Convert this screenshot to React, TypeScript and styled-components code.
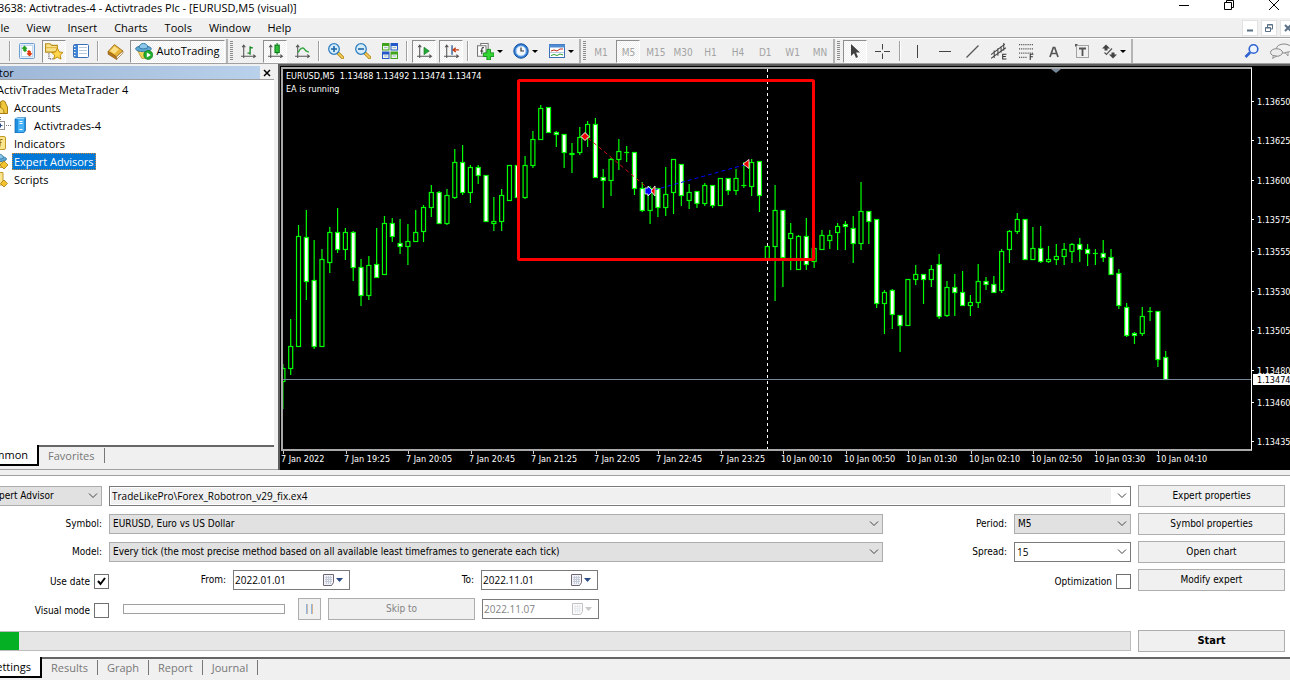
import React from 'react';
import styled, { createGlobalStyle, css } from 'styled-components';

const uiFont = '"Open Sans", "Noto Sans", sans-serif';
const formFont = '"DejaVu Sans Condensed", "Liberation Sans", sans-serif';

const GlobalStyle = createGlobalStyle`
  *, *::before, *::after { box-sizing: border-box; }
  body { margin: 0; background: #f0f0f0; overflow-x: hidden; }
  button, input, select { font: inherit; color: inherit; margin: 0; }
`;

/* ---------- Window shell ---------- */

const Screen = styled.div`
  overflow: hidden;
`;

/* The terminal window is wider than the screen on both sides. */
const Window = styled.div`
  display: flex;
  flex-direction: column;
  min-height: 100vh;
  margin: 0 -8px 0 -40px;
  background: #f0f0f0;
  color: #000;
  font: 11px/16px ${uiFont};
`;

const TitleBar = styled.header`
  display: flex;
  justify-content: space-between;
  align-items: flex-start;
  height: 18px;
  padding: 0 2px 0 38px;
  background: #fff;
`;

const Title = styled.h1`
  margin: 0;
  font-size: 11px;
  line-height: 15px;
  font-weight: 400;
  white-space: pre;
`;

const CaptionButtons = styled.div`
  display: flex;
`;

const CaptionButton = styled.button`
  display: flex;
  justify-content: center;
  width: 45px;
  height: 12px;
  padding: 0;
  border: 0;
  background: none;
`;

const MenuBar = styled.nav`
  display: flex;
  align-items: center;
  height: 20px;
  padding: 0 2px 0 32px;
  border-bottom: 1px solid #a0a0a0;
`;

const MenuItem = styled.button`
  padding: 0;
  margin-right: 17px;
  border: 0;
  background: none;
`;

const DocumentButtons = styled.div`
  display: flex;
  gap: 3px;
  margin-left: auto;
`;

const DocumentButton = styled.button`
  display: flex;
  align-items: center;
  justify-content: center;
  width: 16px;
  height: 16px;
  padding: 0;
  border: 1px solid #e2e2e2;
  background: #fff;
`;

/* ---------- Toolbar ---------- */

const Toolbar = styled.div`
  display: flex;
  align-items: stretch;
  height: 26px;
  border-top: 1px solid #fff;
  border-bottom: 1px solid #a0a0a0;
`;

const ToolGroup = styled.div<{ $start?: number }>`
  display: flex;
  align-items: center;
  gap: 3px;
  padding: 0 1px 0 ${(p) => p.$start ?? 2}px;
  border-right: 2px solid #b4b4b4;
`;

const ToolList = styled.div<{ $width: number }>`
  display: flex;
  align-items: center;
  justify-content: space-between;
  width: ${(p) => p.$width}px;
`;

const Grip = styled.span`
  width: 3px;
  height: 20px;
  background: repeating-linear-gradient(#8c8c8c 0 1px, #f0f0f0 1px 2px);
`;

const Separator = styled.span`
  width: 2px;
  height: 20px;
  margin: 0 1px;
  border-left: 1px solid #a0a0a0;
  border-right: 1px solid #fff;
`;

const pressedLook = css`
  border-color: #8e8e8e #fff #fff #8e8e8e;
  background: repeating-conic-gradient(#fff 0 25%, #f0f0f0 0 50%) 0 0 / 2px 2px;
`;

const ToolButton = styled.button<{ $pressed?: boolean; $drop?: boolean }>`
  display: flex;
  flex: none;
  align-items: center;
  justify-content: ${(p) => (p.$drop ? 'flex-start' : 'center')};
  width: ${(p) => (p.$drop ? 33 : 24)}px;
  height: 23px;
  padding: ${(p) => (p.$drop ? '0 0 0 3px' : 0)};
  border: 1px solid transparent;
  background: none;
  ${(p) => p.$pressed && pressedLook}
`;

const AutoTradingButton = styled(ToolButton)`
  gap: 3px;
  width: 95px;
`;

const TimeframeButton = styled(ToolButton)`
  padding-top: 3px;
  color: #a3a3a3;
  font: 10px/16px ${formFont};
`;

const ToolEnd = styled.div`
  display: flex;
  align-items: center;
  gap: 5px;
  margin-left: auto;
  padding-right: 5px;
`;

const Glyph = styled.svg.attrs({ 'aria-hidden': true })`
  display: block;
  flex: none;
`;

/* ---------- Navigator ---------- */

const Main = styled.main`
  display: flex;
`;

const Navigator = styled.aside`
  display: flex;
  flex-direction: column;
  flex: none;
  width: 318px;
  padding: 1px 4px 1px 0;
  border-bottom: 1px solid #a0a0a0;
`;

const NavigatorHeader = styled.div`
  display: flex;
  height: 15px;
  padding: 1px 0 0;
  border-bottom: 1px solid #a0a0a0;
`;

const NavigatorTitle = styled.h2`
  flex: 1;
  margin: 0;
  padding-left: 4px;
  background: linear-gradient(90deg, #9ab3d4, #b9d1ea);
  font-size: 11px;
  line-height: 13px;
  font-weight: 400;
`;

const CloseButton = styled.button`
  display: flex;
  align-items: center;
  justify-content: center;
  width: 14px;
  padding: 0;
  border: 0;
  background: none;
`;

const Tree = styled.ul`
  flex: 1;
  margin: 0;
  padding: 0;
  background: #fff;
  list-style: none;
`;

const TreeRow = styled.li<{ $indent: number }>`
  display: flex;
  align-items: center;
  height: 18px;
  padding-left: ${(p) => p.$indent}px;
`;

const TreeLabel = styled.span<{ $selected?: boolean }>`
  margin-left: 4px;
  padding: 0 1px;
  border: 1px solid transparent;
  line-height: 15px;
  ${(p) =>
    p.$selected &&
    css`
      border: 1px dotted #d08a3a;
      background: #0078d7;
      color: #fff;
    `}
`;

const TabStrip = styled.div`
  display: flex;
  align-items: flex-start;
  height: 23px;
  border-top: 2px solid #666;
`;

const ActiveTab = styled.button<{ $width: number }>`
  width: ${(p) => p.$width}px;
  height: 21px;
  margin-top: -2px;
  padding: 1px 9px 0 0;
  border: solid #000;
  border-width: 0 2px 2px 0;
  background: #fff;
  text-align: right;
`;

const Tab = styled.button`
  height: 15px;
  margin-top: 1px;
  padding: 0 9px;
  border: 0;
  border-right: 1px solid #777;
  background: none;
  color: #777;
  line-height: 13px;
`;

/* ---------- Chart ---------- */

const ChartWindow = styled.section`
  display: grid;
  flex: 1;
  grid-template-columns: minmax(0, 1fr) 46px;
  min-width: 0;
  padding: 1px 0 0 1px;
  border: solid #5c5c5c;
  border-width: 2px 0 0 2px;
  background: #000;
`;

const PlotFrame = styled.div`
  border: 2px solid #a9a9a9;
  border-right: 1px solid #fff;
`;

const ChartSvg = styled.svg`
  display: block;
  width: 100%;
  font: 9px ${formFont};
`;

/* ---------- Tester ---------- */

const Tester = styled.section`
  display: flex;
  flex: 1;
  flex-direction: column;
  margin-top: 5px;
  border-top: 1px solid #a0a0a0;
`;

const Form = styled.form`
  display: flex;
  flex-direction: column;
  gap: 6px;
  padding: 9px 13px 5px 0;
  background: #fff;
  font: 10px/16px ${formFont};
`;

const FormRow = styled.div<{ $lead?: number }>`
  display: grid;
  grid-template-columns: ${(p) => p.$lead ?? 142}px minmax(0, 1fr) 147px;
  column-gap: 7px;
  align-items: center;
`;

const DateRows = styled.div`
  display: grid;
  row-gap: 7px;
  padding-bottom: 4px;
`;

const ProgressRow = styled.div`
  display: grid;
  grid-template-columns: minmax(0, 1fr) 147px;
  column-gap: 7px;
  align-items: center;
`;

const Fields = styled.div<{ $pad?: number }>`
  display: flex;
  align-items: center;
  gap: 7px;
  padding-left: ${(p) => p.$pad ?? 0}px;
`;

const Label = styled.label<{ $width?: number }>`
  flex: none;
  width: ${(p) => (p.$width ? `${p.$width}px` : 'auto')};
  text-align: right;
`;

const CheckField = styled.label`
  display: flex;
  align-items: center;
  justify-content: flex-end;
  gap: 4px;
  margin-left: auto;
  padding-top: 3px;
`;

const CheckBox = styled.input.attrs({ type: 'checkbox' })`
  appearance: none;
  width: 15px;
  height: 15px;
  border: 1px solid #707070;
  background: #fff;
  &:checked {
    background: #fff
      url("data:image/svg+xml,%3Csvg xmlns='http://www.w3.org/2000/svg' viewBox='0 0 13 13'%3E%3Cpath d='M3 6l2.5 3L10 3' fill='none' stroke='%23000' stroke-width='2'/%3E%3C/svg%3E")
      center / 13px 13px;
  }
`;

const ComboShell = styled.div<{ $width?: number; $indent?: number }>`
  display: grid;
  flex: ${(p) => (p.$width ? 'none' : 1)};
  width: ${(p) => (p.$width ? `${p.$width}px` : 'auto')};
  margin-left: ${(p) => p.$indent ?? 0}px;
  align-items: center;

  > * {
    grid-area: 1 / 1;
  }

  > svg {
    justify-self: end;
    margin-right: 4px;
    pointer-events: none;
  }
`;

const Select = styled.select`
  appearance: none;
  width: 100%;
  height: 20px;
  padding: 0 3px;
  border: 1px solid #adadad;
  border-radius: 0;
  background: #e1e1e1;
`;

const ComboInput = styled.input<{ $shaded?: boolean }>`
  width: 100%;
  height: 20px;
  padding: 0 18px 1px 2px;
  border: 1px solid #7a7a7a;
  background: ${(p) =>
    p.$shaded ? 'linear-gradient(#f0f0f0, #f0f0f0) 1px 1px / calc(100% - 20px) 16px no-repeat, #fff' : '#fff'};
  font: 10px/16px ${uiFont};
`;

const DateShell = styled.div<{ $disabled?: boolean }>`
  display: flex;
  align-items: center;
  width: 117px;
  height: 20px;
  padding-right: 4px;
  border: 1px solid #7a7a7a;
  background: #fff;
  color: ${(p) => (p.$disabled ? '#838383' : '#000')};
`;

const DateInput = styled.input`
  flex: 1;
  min-width: 0;
  padding: 0 0 1px 1px;
  border: 0;
  background: none;
  font: 10px/16px ${uiFont};
`;

const CalendarButton = styled.button`
  padding: 0;
  border: 0;
  background: none;
`;

const SpeedSlider = styled.input.attrs({ type: 'range' })`
  appearance: none;
  width: 162px;
  height: 10px;
  margin-right: 6px;
  border: 1px solid #a0a0a0;
  background: #fdfdfd;
  &::-webkit-slider-thumb {
    appearance: none;
    width: 0;
    height: 0;
  }
`;

const PushButton = styled.button<{ $narrow?: boolean; $strong?: boolean }>`
  display: flex;
  align-items: center;
  justify-content: center;
  width: ${(p) => (p.$narrow ? 23 : 147)}px;
  height: 22px;
  padding: 0;
  border: 1px solid #adadad;
  background: #f0f0f0;
  font-size: ${(p) => (p.$strong ? 11 : 10)}px;
  font-weight: ${(p) => (p.$strong ? 700 : 400)};
  &:disabled {
    color: #838383;
  }
`;

const Progress = styled.progress`
  appearance: none;
  display: block;
  width: 100%;
  height: 20px;
  border: 1px solid #bcbcbc;
  &::-webkit-progress-bar {
    background: #e6e6e6;
  }
  &::-webkit-progress-value {
    background: #06b025;
  }
`;

/* ---------- Icons ---------- */

type IconProps = { children: React.ReactNode; size?: number };

const Icon = ({ children, size = 16 }: IconProps) => (
  <Glyph width={size} height={size} viewBox="0 0 16 16" fill="none">
    {children}
  </Glyph>
);

const DropArrow = () => (
  <Glyph width="9" height="16" viewBox="0 0 9 16">
    <path d="M3 7h6l-3 3z" fill="#000" />
  </Glyph>
);

const Chevron = () => (
  <Glyph width="10" height="8" viewBox="0 0 10 8">
    <path d="M1 1.5l4 4 4-4" fill="none" stroke="#444" />
  </Glyph>
);

const MarketWatchIcon = () => (
  <Icon>
    <rect x="0.500" y="0.500" width="15" height="15" rx="1" fill="#e2effb" stroke="#6d9fd0" />
    <rect x="2.500" y="2.500" width="11" height="11" fill="#fff" stroke="#c3d8ee" />
    <path d="M5.500 2.500l3 3-1.500.5 1 1.500-2 1.500-2-1.500.3-1.500L2.500 5.500z" fill="#25a020" />
    <path d="M10.500 13.500l-3-3 1.500-.5-1-1.500 2-1.500 2 1.500-.3 1.500 1.800.5z" fill="#e03a10" />
  </Icon>
);

const NavigatorIcon = () => (
  <Icon size={18}>
    <path d="M0.500 1.500h4l1.500 1.500h5v6H0.500z" fill="#f9e08b" stroke="#b98f1f" />
    <path d="M1 5h10" stroke="#e0b840" />
    <path d="M3.500 10v5h4" stroke="#555" strokeDasharray="1 1" />
    <path d="M11 5.500l1.600 3.300 3.400.5-2.500 2.400.7 3.500-3.200-1.700-3.200 1.700.7-3.500L6 9.300l3.400-.5z" fill="#ffd64d" stroke="#b98200" strokeWidth="0.800" />
  </Icon>
);

const TerminalIcon = () => (
  <Icon>
    <rect x="0.500" y="1.500" width="15" height="13" rx="1" fill="#fff" stroke="#3b6fb5" />
    <rect x="1" y="2" width="4" height="12" fill="#3f83d6" />
    <path d="M1 3.500h1.500M1 6.500h1.500M1 9.500h1.500M1 12.500h1.500" stroke="#fff" />
    <path d="M6 4.500h8M6 7.500h8M6 10.500h8" stroke="#b9c9dd" />
  </Icon>
);

const BookIcon = () => (
  <Icon size={17}>
    <path d="M1 8L7 1.500l8 6L9 13z" fill="#e9b536" stroke="#9a6a10" strokeWidth="0.800" />
    <path d="M3 7.500L7 3l4 3-4 4z" fill="#fbe08a" />
    <path d="M1 8v2.500L9 15.500V13z" fill="#b87818" stroke="#8a5a10" strokeWidth="0.600" />
    <path d="M9 13l6-5.500v2L9 15.500z" fill="#fff" stroke="#8a5a10" strokeWidth="0.600" />
  </Icon>
);

const ExpertHat = () => (
  <>
    <path d="M2 7h11l-2 7.500H6z" fill="#f4d35a" stroke="#b38a1c" strokeWidth="0.700" />
    <ellipse cx="7.500" cy="6" rx="7" ry="2.600" fill="#5fa8d6" stroke="#2d739f" strokeWidth="0.800" />
    <path d="M3.500 5C4 0 11 0 11.500 5c-2 1.500-6 1.500-8 0z" fill="#8cc7ea" stroke="#2d739f" strokeWidth="0.800" />
  </>
);

const AutoTradingIcon = () => (
  <Icon size={18}>
    <ExpertHat />
    <circle cx="11.800" cy="11.500" r="4" fill="#1fae2b" stroke="#0b7a15" strokeWidth="0.600" />
    <path d="M10.500 9.300l3.600 2.200-3.600 2.200z" fill="#fff" />
  </Icon>
);

const Axes = () => (
  <path d="M3.500 2v12M1 12.500h13M2 4l1.500-2L5 4M12.500 11l2 1.500-2 1.500" stroke="#555" />
);

const BarsIcon = () => (
  <Icon size={17}>
    <Axes />
    <path d="M9.500 3v8M7 9.500h2.500M9.500 4.500H12" stroke="#1c8a2a" strokeWidth="1.300" />
  </Icon>
);

const CandlesIcon = () => (
  <Icon size={17}>
    <Axes />
    <path d="M9.500 0v11" stroke="#0c7a18" />
    <rect x="7.500" y="2" width="4" height="7" fill="#2fc13c" stroke="#0c7a18" />
  </Icon>
);

const LineIcon = () => (
  <Icon size={17}>
    <Axes />
    <path d="M4 9c2-5 5-5 6-3 1 2 2 2 4 2.500" stroke="#2aa238" strokeWidth="1.200" />
  </Icon>
);

const ZoomIcon = ({ plus }: { plus?: boolean }) => (
  <Icon>
    <path d="M10 10l4.500 4.500" stroke="#b98a1c" strokeWidth="3.200" strokeLinecap="round" />
    <path d="M10.500 10.500l4 4" stroke="#f6d45c" strokeWidth="1.600" strokeLinecap="round" />
    <circle cx="6" cy="6" r="5.300" fill="#d5ecfb" stroke="#2f7fc0" strokeWidth="1.300" />
    <path d={plus ? 'M3 6h6M6 3v6' : 'M3 6h6'} stroke="#1c66a8" strokeWidth="1.600" />
  </Icon>
);

const TileIcon = () => (
  <Icon>
    <rect x="0" y="0" width="7.500" height="7.500" fill="#3fa31b" />
    <rect x="8.500" y="0" width="7.500" height="7.500" fill="#2458c8" />
    <rect x="0" y="8.500" width="7.500" height="7.500" fill="#2458c8" />
    <rect x="8.500" y="8.500" width="7.500" height="7.500" fill="#3fa31b" />
    <path d="M1 3h5.500v3.500H1zM9.500 3H15v3.500H9.500zM1 11.500h5.500V15H1zM9.500 11.500H15V15H9.500z" fill="#eef5e8" />
    <path d="M2 4.500h3.500M10.500 4.500H14M2 13h3.500M10.500 13H14" stroke="#9fb8d8" />
  </Icon>
);

const ScrollIcon = () => (
  <Icon size={17}>
    <Axes />
    <path d="M7.500 4l5 3.500-5 3.500z" fill="#25a83a" stroke="#0f7a20" strokeWidth="0.600" />
  </Icon>
);

const ShiftIcon = () => (
  <Icon size={17}>
    <Axes />
    <path d="M8.500 2v9" stroke="#2f5f9a" strokeWidth="1.300" />
    <path d="M15 6.500H10M12 4.500l-2.500 2 2.500 2" stroke="#c33c14" strokeWidth="1.300" />
  </Icon>
);

const IndicatorsIcon = () => (
  <Icon size={17}>
    <path d="M3.500 0.500h7v9h-7z" fill="#fff" stroke="#777" />
    <path d="M0.500 2.500h8v10h-8z" fill="#fff" stroke="#777" />
    <path d="M6.500 4.500c-2-.6-2 1-2 2v4M3 7.500h3" stroke="#333" />
    <path d="M9.300 6h3.400v3.300H16v3.400h-3.300V16H9.300v-3.300H6V9.300h3.300z" fill="#35d535" stroke="#0a8a12" strokeWidth="0.800" />
  </Icon>
);

const ClockIcon = () => (
  <Icon>
    <circle cx="8" cy="8" r="7.200" fill="#2f7fd6" stroke="#164f9c" />
    <circle cx="8" cy="8" r="5" fill="#f4f9ff" stroke="#9fc6ee" />
    <path d="M8 4.500V8h3" stroke="#333" strokeWidth="1.200" />
  </Icon>
);

const TemplateIcon = () => (
  <Icon>
    <rect x="0.500" y="1.500" width="15" height="13" fill="#fff" stroke="#3b6fb5" />
    <path d="M0 3h16" stroke="#4f8cd2" strokeWidth="3" />
    <path d="M2 8l3-1 3 1 3-2h3" stroke="#c22c1a" />
    <path d="M1 9.500h14" stroke="#b9c9dd" />
    <path d="M2 12.500l3-1 3 1 3-1.500 3 1" stroke="#2f9e35" />
  </Icon>
);

const CursorIcon = () => (
  <Icon>
    <path d="M4 1v12l3-2.700 2 4.700 2-1-2-4.500h4z" fill="#404040" />
  </Icon>
);

const CrosshairIcon = () => (
  <Icon>
    <path d="M8.500 1v5.500M8.500 10.500V16M1 8.500h6M10 8.500h6" stroke="#444" />
  </Icon>
);

const VerticalLineIcon = () => (
  <Icon>
    <path d="M8.500 2v13" stroke="#444" />
  </Icon>
);

const HorizontalLineIcon = () => (
  <Icon>
    <path d="M2 8.500h12" stroke="#444" />
  </Icon>
);

const TrendLineIcon = () => (
  <Icon>
    <path d="M2.500 14.500L14.500 2.500" stroke="#555" strokeWidth="1.200" />
  </Icon>
);

const ChannelIcon = () => (
  <Icon size={17}>
    <path d="M0 11L13 1M0 14.500L14 4.500M3 14V7M6.500 12V5M9.500 9V3M12 7V0" stroke="#444" />
    <path d="M14.500 10.500h-3.500v4.500h3.500M11 12.700h3" stroke="#333" />
  </Icon>
);

const FibonacciIcon = () => (
  <Icon size={17}>
    <path d="M1 1.500h14M1 5.500h14M1 9.500h14M1 13.500h8" stroke="#444" strokeDasharray="1 1" />
    <path d="M14.500 10.500h-3V16M11.500 13h2.500" stroke="#333" />
  </Icon>
);

const TextIcon = () => (
  <Icon>
    <path d="M4 14L7.300 4.500h1.400L12 14M5.500 10.500h5" stroke="#555" strokeWidth="1.700" />
  </Icon>
);

const TextLabelIcon = () => (
  <Icon>
    <rect x="2.500" y="2.500" width="12" height="12" stroke="#555" strokeDasharray="1 1" />
    <path d="M5 5.500h7M8.500 5v8" stroke="#555" strokeWidth="1.800" />
    <path d="M1 1h3L1 4z" fill="#555" />
  </Icon>
);

const ShapesIcon = () => (
  <Icon>
    <path d="M5 1.500L9 5.500H6.500V7.500h-3V5.500H1z" fill="#444" />
    <path d="M12 15.500l-4-4h2.500V9.500h3v2H16z" fill="#444" />
    <path d="M3.500 9.500l2 2L11 5.500" stroke="#555" strokeWidth="1.200" />
  </Icon>
);

const SearchIcon = () => (
  <Icon>
    <circle cx="9.500" cy="6" r="4.300" stroke="#2e62d0" strokeWidth="1.600" fill="#eef4ff" />
    <path d="M6 9.500L1.500 14" stroke="#2e62d0" strokeWidth="2.600" />
  </Icon>
);

const ChatIcon = () => (
  <Glyph width="24" height="16" viewBox="0 0 24 16">
    <ellipse cx="15" cy="5.500" rx="7.500" ry="4.500" fill="#f2f2f2" stroke="#888" />
    <path d="M16 9.500l3 3.500v-4z" fill="#eee" stroke="#888" strokeWidth="0.800" />
    <ellipse cx="7.500" cy="9.500" rx="6" ry="3.800" fill="#ececec" stroke="#888" />
    <path d="M4.500 12.500L3.500 15.500l4-2.300z" fill="#ddd" stroke="#888" strokeWidth="0.800" />
  </Glyph>
);

const AccountsIcon = () => (
  <Icon>
    <path d="M8.500 14.500V4c0-3 5-3 5 0l2 4v6.500z" fill="#f0c73a" stroke="#a67c12" />
    <path d="M1 14.500c0-5 2-6.500 5-6.500s6 1.500 6 6.500z" fill="#f7d969" stroke="#a67c12" />
    <circle cx="6" cy="5" r="3" fill="#f7d969" stroke="#a67c12" />
  </Icon>
);

const ServerIcon = () => (
  <Icon>
    <path d="M3 2l3-1.500h7.500v13L11.500 16H3z" fill="#1f8fe0" stroke="#0f63ad" strokeWidth="0.700" />
    <path d="M3 2l3-1.500h7.500L11.500 2z" fill="#9ed4fa" />
    <rect x="6" y="2" width="6" height="13" fill="#48b2f5" />
    <path d="M7.500 4.500h3M7.500 6.500h3M7.500 12.500h3" stroke="#fff" />
  </Icon>
);

const IndicatorFolderIcon = () => (
  <Icon>
    <rect x="1.500" y="1.500" width="12" height="13" rx="1.500" fill="#fbe58d" stroke="#c29a26" />
    <path d="M10.500 4.500H9c-1 0-1 .5-1 2v5M6.500 7.500h3" stroke="#8a6a10" />
  </Icon>
);

const ExpertFolderIcon = () => (
  <Icon>
    <ExpertHat />
    <path d="M12 8l4 4-4 4-4-4z" fill="#f4c430" stroke="#a67c12" strokeWidth="0.800" />
  </Icon>
);

const ScriptFolderIcon = () => (
  <Icon>
    <path d="M4 1.500h7v9c2 0 3 1 2.500 3.500H6.500C5 14 4 13 4 11z" fill="#fbe58d" stroke="#c29a26" />
    <path d="M12 9l3.500 3.500L12 16l-3.500-3.500z" fill="#f4c430" stroke="#a67c12" strokeWidth="0.800" />
  </Icon>
);

const TreeToggle = () => (
  <Icon>
    <rect x="0.500" y="4.500" width="8" height="8" fill="#fff" stroke="#919191" />
    <path d="M2.500 8.500h4M4.500 6.500v4" stroke="#2c4a8c" />
    <path d="M10 8.500h6M4.500 0v4" stroke="#777" strokeDasharray="1 1" />
  </Icon>
);

const CalendarIcon = ({ muted }: { muted?: boolean }) => (
  <Glyph width="23" height="14" viewBox="0 0 23 14" opacity={muted ? 0.4 : 1}>
    <path d="M1.500 1.500h10v8l-2 3h-8z" fill="#f3f3f7" stroke="#6e6670" />
    <path d="M3 4.500h7M3 6.500h7M3 8.500h7M4.500 3v8M6.500 3v8M8.500 3v8" stroke="#c5cbd8" />
    <path d="M14 5h7l-3.500 4z" fill={muted ? '#777' : '#2c4a86'} />
  </Glyph>
);

/* ---------- Chart data ---------- */

// [high, open/close top, open/close bottom, low, filled]
type Candle = [number, number, number, number, 0 | 1];

const candles: Candle[] = [
  [364, 368, 381, 408, 0], [319, 346, 368, 374, 0], [225, 236, 346, 346, 0], [210, 237, 281, 299, 1],
  [240, 280, 346, 348, 1], [249, 259, 346, 346, 0], [227, 232, 262, 272, 0], [208, 232, 249, 252, 1],
  [228, 232, 249, 259, 0], [231, 232, 267, 280, 1], [259, 267, 295, 305, 1], [256, 265, 295, 299, 0],
  [228, 264, 277, 277, 1], [216, 223, 274, 274, 0], [218, 223, 236, 241, 1], [219, 243, 246, 253, 1],
  [224, 241, 246, 264, 0], [210, 232, 241, 241, 0], [205, 207, 231, 241, 0], [185, 192, 207, 216, 0],
  [191, 192, 223, 223, 1], [189, 195, 223, 224, 0], [149, 162, 197, 198, 0], [145, 162, 192, 194, 1],
  [165, 167, 192, 202, 0], [165, 167, 175, 183, 1], [175, 175, 221, 221, 1], [197, 221, 223, 230, 0],
  [189, 195, 221, 230, 0], [165, 165, 200, 200, 0], [165, 165, 197, 197, 1], [156, 165, 197, 198, 0],
  [131, 139, 165, 167, 0], [105, 108, 139, 139, 0], [107, 107, 132, 132, 1], [131, 132, 134, 146, 1],
  [134, 134, 152, 167, 1], [143, 153, 154, 172, 1], [127, 137, 152, 154, 0], [121, 124, 137, 146, 0],
  [118, 124, 177, 177, 1], [169, 177, 180, 207, 1], [158, 159, 180, 195, 0], [139, 151, 159, 169, 0],
  [146, 152, 152, 161, 0], [152, 152, 188, 194, 1], [182, 188, 210, 211, 1], [186, 188, 210, 223, 0],
  [188, 188, 207, 216, 1], [167, 194, 207, 215, 0], [159, 159, 192, 213, 0], [164, 164, 195, 205, 1],
  [184, 192, 200, 208, 0], [191, 191, 203, 207, 1], [183, 185, 203, 205, 0], [185, 185, 205, 207, 1],
  [178, 178, 205, 205, 0], [178, 178, 190, 194, 1], [169, 178, 190, 194, 0], [162, 185, 185, 187, 0],
  [159, 162, 186, 195, 0], [161, 161, 195, 211, 1], [246, 246, 258, 258, 0], [185, 210, 246, 300, 0],
  [210, 210, 257, 286, 1], [223, 233, 238, 269, 0], [235, 236, 269, 269, 0], [218, 236, 264, 269, 1],
  [248, 248, 261, 267, 0], [230, 235, 249, 249, 0], [230, 235, 240, 248, 0], [223, 226, 232, 249, 0],
  [221, 224, 226, 249, 1], [216, 228, 243, 262, 1], [182, 211, 243, 249, 0], [211, 211, 221, 243, 1],
  [219, 219, 303, 307, 1], [290, 292, 303, 333, 0], [289, 290, 314, 328, 1], [315, 315, 325, 351, 1],
  [279, 279, 325, 325, 0], [265, 274, 279, 284, 0], [274, 274, 279, 303, 1], [265, 269, 279, 286, 0],
  [254, 264, 316, 318, 1], [281, 287, 315, 316, 0], [274, 287, 292, 315, 1], [271, 292, 305, 305, 1],
  [295, 302, 305, 315, 0], [264, 281, 302, 307, 0], [277, 281, 284, 289, 1], [276, 284, 292, 292, 1],
  [249, 251, 290, 292, 0], [230, 231, 249, 262, 0], [213, 219, 231, 233, 0], [219, 219, 259, 259, 1],
  [227, 248, 259, 259, 0], [226, 248, 261, 262, 1], [246, 259, 261, 262, 0], [244, 256, 259, 264, 0],
  [243, 249, 256, 264, 0], [243, 244, 251, 262, 0], [238, 244, 249, 261, 1], [244, 249, 253, 265, 1],
  [249, 253, 253, 264, 0], [240, 253, 257, 261, 1], [249, 257, 274, 274, 1], [269, 273, 305, 308, 1],
  [303, 307, 335, 336, 1], [332, 333, 335, 343, 1], [307, 316, 333, 335, 0], [307, 311, 311, 320, 0],
  [311, 311, 359, 366, 1], [351, 357, 379, 379, 1],
];

const firstBar = 282.9;
const barStep = 7.8125;

const timeLabels = [
  '7 Jan 2022', '7 Jan 19:25', '7 Jan 20:05', '7 Jan 20:45', '7 Jan 21:25', '7 Jan 22:05', '7 Jan 22:45',
  '7 Jan 23:25', '10 Jan 00:10', '10 Jan 00:50', '10 Jan 01:30', '10 Jan 02:10', '10 Jan 02:50',
  '10 Jan 03:30', '10 Jan 04:10',
];

const priceLabels: [string, number][] = [
  ['1.13650', 101], ['1.13625', 140], ['1.13600', 180], ['1.13575', 219], ['1.13555', 251], ['1.13530', 291],
  ['1.13505', 330], ['1.13480', 370], ['1.13460', 402], ['1.13435', 441],
];

const CandleShape = ({ candle, index }: { candle: Candle; index: number }) => {
  const [high, top, bottom, low, filled] = candle;
  const x = firstBar + index * barStep;
  return (
    <g stroke="#00ff00" strokeWidth="1.2">
      <path d={`M${x} ${high}V${low + 1}`} />
      {top === bottom ? (
        <path d={`M${x - 2.5} ${top + 0.5}h5`} />
      ) : (
        <rect x={x - 2} y={top + 0.5} width="4" height={bottom - top} fill={filled ? '#fff' : '#000'} />
      )}
    </g>
  );
};

const Plot = () => (
  <ChartSvg height="380" fill="none" role="img" aria-label="EURUSD M5 candlestick chart">
    <g transform="translate(-283 -69)">
      <path d="M767.500 69v380" stroke="#fff" strokeDasharray="3 3" />
      {candles.map((candle, index) => (
        <CandleShape key={index} candle={candle} index={index} />
      ))}
      <path d="M283 379.500h4000" stroke="#778899" />
      <path d="M588 138L650 190" stroke="#d01010" strokeDasharray="4 3" />
      <path d="M654 190L744 165" stroke="#0000ff" strokeDasharray="4 3" />
      <path d="M581 136.500l4-4 4 4-4 4z" fill="#f00000" stroke="#fff" />
      <path d="M645 188h3v-2l5 5-5 5v-2h-3z" fill="#0000ff" stroke="#fff" strokeWidth="0.800" />
      <path d="M655 186v10l-4-5z" fill="#f00000" stroke="#fff" strokeWidth="0.800" />
      <path d="M749 159.500v9l-6-4.500z" fill="#f00000" stroke="#fff" strokeWidth="0.800" />
      <rect x="518.500" y="80.500" width="295" height="179" rx="1" stroke="#ff0000" strokeWidth="3" />
      <path d="M1051 69h10l-5 4z" fill="#778899" />
      <text x="286" y="79" fill="#fff" xmlSpace="preserve">
        {'EURUSD,M5  1.13488 1.13492 1.13474 1.13474'}
      </text>
      <text x="286" y="92" fill="#fff">EA is running</text>
    </g>
  </ChartSvg>
);

const TimeAxis = () => (
  <ChartSvg height="19" fill="#fff">
    {timeLabels.map((label, i) => (
      <g key={label}>
        <path d={`M${Math.round(2 + i * 62.5) + 0.5} 0v3`} stroke="#c8c8c8" />
        <text x={Math.round(i * 62.5)} y="11">{label}</text>
      </g>
    ))}
  </ChartSvg>
);

const PriceAxis = () => (
  <ChartSvg height="384" fill="#fff">
    <g transform="translate(-1252 -67)">
      {priceLabels.map(([label, y]) => (
        <g key={label}>
          <path d={`M1252 ${y + 0.5}h2`} stroke="#fff" />
          <text x="1257" y={y + 4}>{label}</text>
        </g>
      ))}
      <rect x="1253" y="374" width="60" height="11" />
      <text x="1257" y="383" fill="#000">1.13474</text>
    </g>
  </ChartSvg>
);

/* ---------- Composite controls ---------- */

type ComboProps = { id: string; label?: string; value: string; width?: number; indent?: number };

const SelectBox = ({ id, label, value, width, indent }: ComboProps) => (
  <ComboShell $width={width} $indent={indent}>
    <Select id={id} aria-label={label} defaultValue={value}>
      <option>{value}</option>
    </Select>
    <Chevron />
  </ComboShell>
);

const ComboBox = ({ id, label, value, width, shaded }: ComboProps & { shaded?: boolean }) => (
  <ComboShell $width={width}>
    <ComboInput id={id} aria-label={label} defaultValue={value} $shaded={shaded} />
    <Chevron />
  </ComboShell>
);

const DateBox = ({ id, label, value, disabled }: ComboProps & { disabled?: boolean }) => (
  <DateShell $disabled={disabled}>
    <DateInput id={id} aria-label={label} defaultValue={value} disabled={disabled} />
    <CalendarButton type="button" aria-label="Open calendar" disabled={disabled}>
      <CalendarIcon muted={disabled} />
    </CalendarButton>
  </DateShell>
);

const menus = ['File', 'View', 'Insert', 'Charts', 'Tools', 'Window', 'Help'];
const timeframes = ['M1', 'M5', 'M15', 'M30', 'H1', 'H4', 'D1', 'W1', 'MN'];
const testerTabs = ['Results', 'Graph', 'Report', 'Journal'];

const TopBars = () => (
  <>
    <TitleBar>
      <Title>3638: Activtrades-4 - Activtrades Plc - [EURUSD,M5 (visual)]</Title>
      <CaptionButtons>
        <CaptionButton aria-label="Minimize">
          <Glyph width="12" height="12" viewBox="0 0 12 12"><path d="M1 5.500h10" stroke="#000" /></Glyph>
        </CaptionButton>
        <CaptionButton aria-label="Restore">
          <Glyph width="12" height="12" viewBox="0 0 12 12" fill="none">
            <path d="M1.500 2.500h7v7h-7zM3.500 2.500v-2h7v7h-2" stroke="#000" />
          </Glyph>
        </CaptionButton>
        <CaptionButton aria-label="Close">
          <Glyph width="12" height="12" viewBox="0 0 12 12"><path d="M1 0l10 10M11 0L1 10" stroke="#000" /></Glyph>
        </CaptionButton>
      </CaptionButtons>
    </TitleBar>
    <MenuBar>
      {menus.map((name) => (
        <MenuItem key={name}>{name}</MenuItem>
      ))}
      <DocumentButtons>
        <DocumentButton aria-label="Minimize chart">
          <Glyph width="8" height="8" viewBox="0 0 8 8"><path d="M1 6.500h6" stroke="#5b7186" strokeWidth="2" /></Glyph>
        </DocumentButton>
        <DocumentButton aria-label="Restore chart">
          <Glyph width="8" height="8" viewBox="0 0 8 8" fill="none">
            <path d="M.5 3.500h5v4h-5zM2.500 3V.5h5v4.500H6M.5 4h5M2.500 1h5" stroke="#5b7186" />
          </Glyph>
        </DocumentButton>
        <DocumentButton aria-label="Close chart">
          <Glyph width="8" height="8" viewBox="0 0 8 8"><path d="M1 1l6 6M7 1L1 7" stroke="#5b7186" strokeWidth="2" /></Glyph>
        </DocumentButton>
      </DocumentButtons>
    </MenuBar>
    <Toolbar role="toolbar">
      <ToolGroup $start={48}>
        <Separator />
        <ToolButton aria-label="Market Watch"><MarketWatchIcon /></ToolButton>
        <ToolButton aria-label="Navigator" $pressed><NavigatorIcon /></ToolButton>
        <ToolButton aria-label="Terminal"><TerminalIcon /></ToolButton>
        <Separator />
        <ToolButton aria-label="MetaEditor"><BookIcon /></ToolButton>
        <AutoTradingButton $pressed>
          <AutoTradingIcon />
          AutoTrading
        </AutoTradingButton>
      </ToolGroup>
      <ToolGroup>
        <Grip />
        <ToolButton aria-label="Bar chart"><BarsIcon /></ToolButton>
        <ToolButton aria-label="Candlesticks" $pressed><CandlesIcon /></ToolButton>
        <ToolButton aria-label="Line chart"><LineIcon /></ToolButton>
        <Separator />
        <ToolButton aria-label="Zoom in"><ZoomIcon plus /></ToolButton>
        <ToolButton aria-label="Zoom out"><ZoomIcon /></ToolButton>
        <ToolButton aria-label="Tile windows"><TileIcon /></ToolButton>
        <Separator />
        <ToolButton aria-label="Auto scroll" $pressed><ScrollIcon /></ToolButton>
        <ToolButton aria-label="Chart shift" $pressed><ShiftIcon /></ToolButton>
        <Separator />
        <ToolButton aria-label="Indicators" $drop><IndicatorsIcon /><DropArrow /></ToolButton>
        <ToolButton aria-label="Periods" $drop><ClockIcon /><DropArrow /></ToolButton>
        <ToolButton aria-label="Templates" $drop><TemplateIcon /><DropArrow /></ToolButton>
      </ToolGroup>
      <ToolGroup>
        <Grip />
        <ToolList $width={243}>
          {timeframes.map((name) => (
            <TimeframeButton key={name} $pressed={name === 'M5'}>{name}</TimeframeButton>
          ))}
        </ToolList>
      </ToolGroup>
      <ToolGroup>
        <Grip />
        <ToolList $width={287}>
          <ToolButton aria-label="Cursor" $pressed><CursorIcon /></ToolButton>
          <ToolButton aria-label="Crosshair"><CrosshairIcon /></ToolButton>
          <Separator />
          <ToolButton aria-label="Vertical line"><VerticalLineIcon /></ToolButton>
          <ToolButton aria-label="Horizontal line"><HorizontalLineIcon /></ToolButton>
          <ToolButton aria-label="Trendline"><TrendLineIcon /></ToolButton>
          <ToolButton aria-label="Equidistant channel"><ChannelIcon /></ToolButton>
          <ToolButton aria-label="Fibonacci retracement"><FibonacciIcon /></ToolButton>
          <ToolButton aria-label="Text"><TextIcon /></ToolButton>
          <ToolButton aria-label="Text label"><TextLabelIcon /></ToolButton>
          <ToolButton aria-label="Arrows" $drop><ShapesIcon /><DropArrow /></ToolButton>
        </ToolList>
      </ToolGroup>
      <ToolEnd>
        <ToolButton aria-label="Search"><SearchIcon /></ToolButton>
        <ToolButton aria-label="Community"><ChatIcon /></ToolButton>
      </ToolEnd>
    </Toolbar>
  </>
);

const NavigatorPanel = () => (
  <Navigator>
    <NavigatorHeader>
      <NavigatorTitle>Navigator</NavigatorTitle>
      <CloseButton aria-label="Close navigator">
        <Glyph width="8" height="8" viewBox="0 0 8 8"><path d="M1 1l6 6M7 1L1 7" stroke="#000" strokeWidth="1.500" /></Glyph>
      </CloseButton>
    </NavigatorHeader>
    <Tree>
      <TreeRow $indent={15}><AccountsIcon /><TreeLabel>ActivTrades MetaTrader 4</TreeLabel></TreeRow>
      <TreeRow $indent={32}><AccountsIcon /><TreeLabel>Accounts</TreeLabel></TreeRow>
      <TreeRow $indent={36}><TreeToggle /><ServerIcon /><TreeLabel>Activtrades-4</TreeLabel></TreeRow>
      <TreeRow $indent={32}><IndicatorFolderIcon /><TreeLabel>Indicators</TreeLabel></TreeRow>
      <TreeRow $indent={32}><ExpertFolderIcon /><TreeLabel $selected>Expert Advisors</TreeLabel></TreeRow>
      <TreeRow $indent={32}><ScriptFolderIcon /><TreeLabel>Scripts</TreeLabel></TreeRow>
    </Tree>
    <TabStrip>
      <ActiveTab $width={79}>Common</ActiveTab>
      <Tab>Favorites</Tab>
    </TabStrip>
  </Navigator>
);

const TesterPanel = () => (
  <Tester>
    <Form>
      <FormRow>
        <SelectBox id="kind" label="Program type" value="Expert Advisor" indent={24} />
        <ComboBox id="expert" label="Expert" value="TradeLikePro\Forex_Robotron_v29_fix.ex4" shaded />
        <PushButton type="button">Expert properties</PushButton>
      </FormRow>
      <FormRow>
        <Label htmlFor="symbol">Symbol:</Label>
        <Fields>
          <SelectBox id="symbol" value="EURUSD, Euro vs US Dollar" />
          <Label htmlFor="period" $width={117}>Period:</Label>
          <SelectBox id="period" value="M5" width={117} />
        </Fields>
        <PushButton type="button">Symbol properties</PushButton>
      </FormRow>
      <FormRow>
        <Label htmlFor="model">Model:</Label>
        <Fields>
          <SelectBox
            id="model"
            value="Every tick (the most precise method based on all available least timeframes to generate each tick)"
          />
          <Label htmlFor="spread" $width={117}>Spread:</Label>
          <ComboBox id="spread" value="15" width={117} />
        </Fields>
        <PushButton type="button">Open chart</PushButton>
      </FormRow>
      <DateRows>
        <FormRow $lead={149}>
          <CheckField>Use date<CheckBox defaultChecked /></CheckField>
          <Fields>
            <Label htmlFor="from" $width={110}>From:</Label>
            <DateBox id="from" value="2022.01.01" />
            <Label htmlFor="to" $width={117}>To:</Label>
            <DateBox id="to" value="2022.11.01" />
            <CheckField>Optimization<CheckBox /></CheckField>
          </Fields>
          <PushButton type="button">Modify expert</PushButton>
        </FormRow>
        <FormRow $lead={149}>
          <CheckField>Visual mode<CheckBox /></CheckField>
          <Fields $pad={7}>
            <SpeedSlider aria-label="Speed" disabled />
            <PushButton type="button" aria-label="Pause" $narrow disabled>
              <Glyph width="9" height="10" viewBox="0 0 9 10">
                <path d="M1.500 0v10" stroke="#8fb6de" />
                <path d="M2.500 0v10" stroke="#c9b8a8" />
                <path d="M6.500 0v10" stroke="#8fb6de" />
                <path d="M7.500 0v10" stroke="#d8b48c" />
              </Glyph>
            </PushButton>
            <PushButton type="button" disabled>Skip to</PushButton>
            <DateBox id="skip" label="Skip to date" value="2022.11.07" disabled />
          </Fields>
        </FormRow>
      </DateRows>
      <ProgressRow>
        <Progress value={5} max={100} aria-label="Testing progress" />
        <PushButton type="button" $strong>Start</PushButton>
      </ProgressRow>
    </Form>
    <TabStrip>
      <ActiveTab $width={82}>Settings</ActiveTab>
      {testerTabs.map((name) => (
        <Tab key={name}>{name}</Tab>
      ))}
    </TabStrip>
  </Tester>
);

export default function App() {
  return (
    <Screen>
      <GlobalStyle />
      <Window>
        <TopBars />
        <Main>
          <NavigatorPanel />
          <ChartWindow>
            <PlotFrame><Plot /></PlotFrame>
            <PriceAxis />
            <TimeAxis />
          </ChartWindow>
        </Main>
        <TesterPanel />
      </Window>
    </Screen>
  );
}
